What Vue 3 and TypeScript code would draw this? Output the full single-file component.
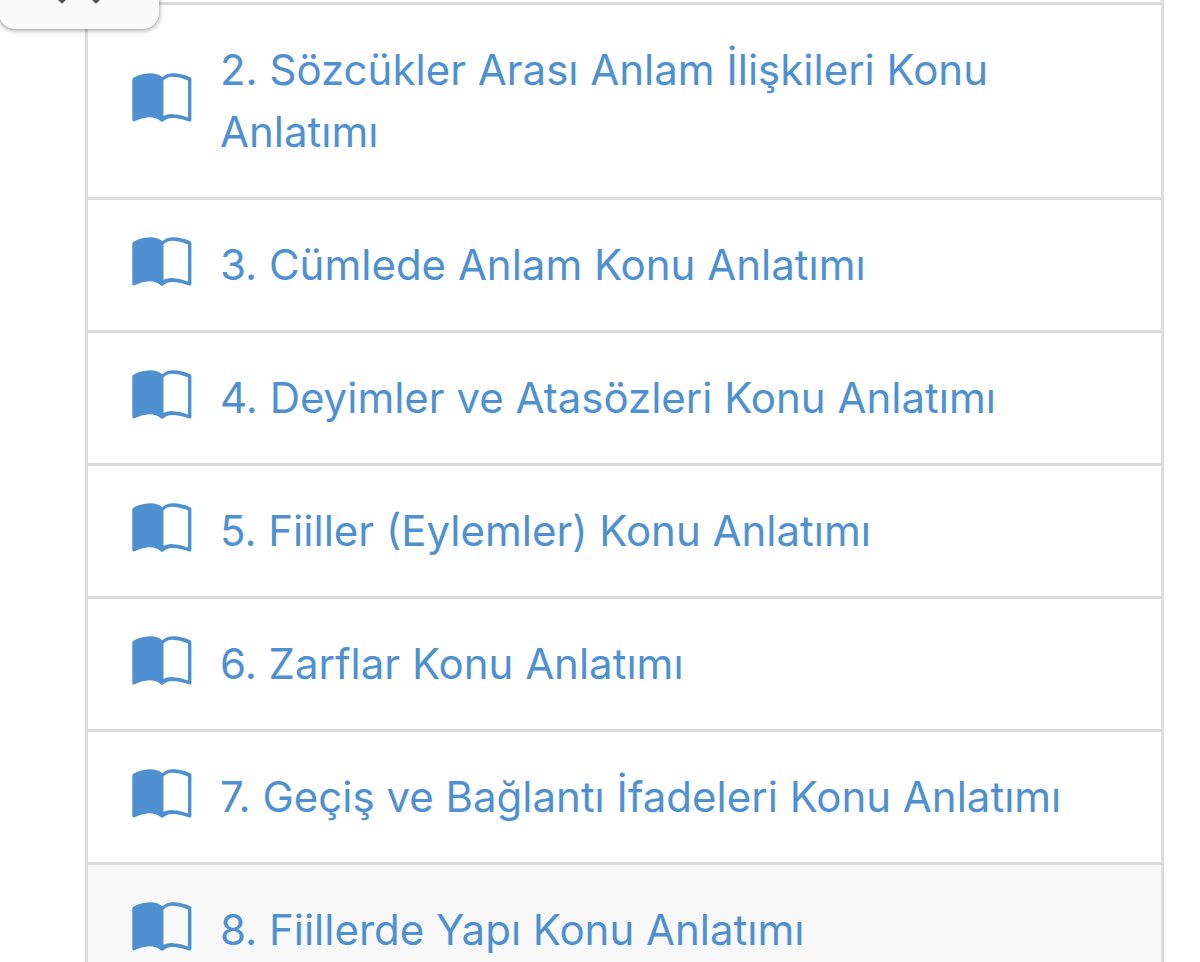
<script setup lang="ts">
interface Topic {
  no: number
  title: string
  active?: boolean
}

const topics: Topic[] = [
  { no: 2, title: 'Sözcükler Arası Anlam İlişkileri Konu Anlatımı' },
  { no: 3, title: 'Cümlede Anlam Konu Anlatımı' },
  { no: 4, title: 'Deyimler ve Atasözleri Konu Anlatımı' },
  { no: 5, title: 'Fiiller (Eylemler) Konu Anlatımı' },
  { no: 6, title: 'Zarflar Konu Anlatımı' },
  { no: 7, title: 'Geçiş ve Bağlantı İfadeleri Konu Anlatımı' },
  { no: 8, title: 'Fiillerde Yapı Konu Anlatımı', active: true },
]
</script>

<template>
  <div class="page" lang="tr">
    <ul class="topics">
      <li v-for="topic in topics" :key="topic.no" class="topic">
        <a href="#" class="link" :class="{ active: topic.active }">
          <svg class="book" viewBox="0 0 60 50" aria-hidden="true">
            <path
              fill="currentColor"
              fill-rule="evenodd"
              d="M0.3 6.2Q0.3 5.2 1.4 4.700Q9 0.600 18 0.300Q25.500 0.200 30.400 4.200Q34.500 0.300 41 0.300Q50.500 0.600 58.200 4.200Q59.400 4.800 59.400 6.100V47Q59.200 49.200 57 48.400Q48 44.800 39.500 44.900Q34.800 45 31.300 48.300Q30 49.400 28.700 48.300Q24.500 44.300 17 44.200Q9.500 44.500 2.400 48.300Q0.500 49.100 0.300 47.100ZM31.500 7.500V42.800Q35.500 41 39.500 41Q48 41.200 56 44.400V7.500Q48.500 4 40.500 3.700Q34.500 3.700 31.500 7.500Z"
            />
          </svg>
          <span class="title">{{ topic.no }}. {{ topic.title }}</span>
        </a>
      </li>
    </ul>
    <button type="button" class="toggle" aria-label="Menü">
      <svg class="tips" viewBox="0 0 44 4" aria-hidden="true">
        <path fill="#555" d="M0 -1H10L6.200 2.800Q5 4 3.800 2.800ZM34 -1H44L40.200 2.800Q39 4 37.800 2.800Z" />
      </svg>
    </button>
  </div>
</template>

<style>
body {
  margin: 0;
  background: #fefefe;
}
</style>

<style scoped>
.page {
  position: relative;
  height: 100vh;
  overflow: hidden;
  font-family: Inter, "Noto Sans", sans-serif;
}

.topics {
  list-style: none;
  margin: 0 36px 0 85px;
  padding: 2px 0 0;
  border: solid #dcdcdc;
  border-width: 0 3px;
}

.topic {
  border-top: 3px solid #dcdcdc;
}

.link {
  display: flex;
  align-items: center;
  gap: 28px;
  padding: 34px 44px;
  color: #4f91d0;
  font-size: 42px;
  line-height: 62px;
  text-decoration: none;
}

.link:hover,
.active {
  background: #f8f8f8;
}

.book {
  flex: none;
  width: 60px;
  height: 50px;
  margin-bottom: 7px;
}

.toggle {
  position: absolute;
  top: -40px;
  left: -1px;
  width: 160px;
  height: 69px;
  padding: 40px 0 0;
  border: 0;
  border-radius: 16px;
  background: #fafafa;
  box-shadow: 0 1px 5px rgba(0, 0, 0, 0.45);
}

.tips {
  display: block;
  width: 44px;
  height: 4px;
  margin: 0 auto 25px;
}
</style>
